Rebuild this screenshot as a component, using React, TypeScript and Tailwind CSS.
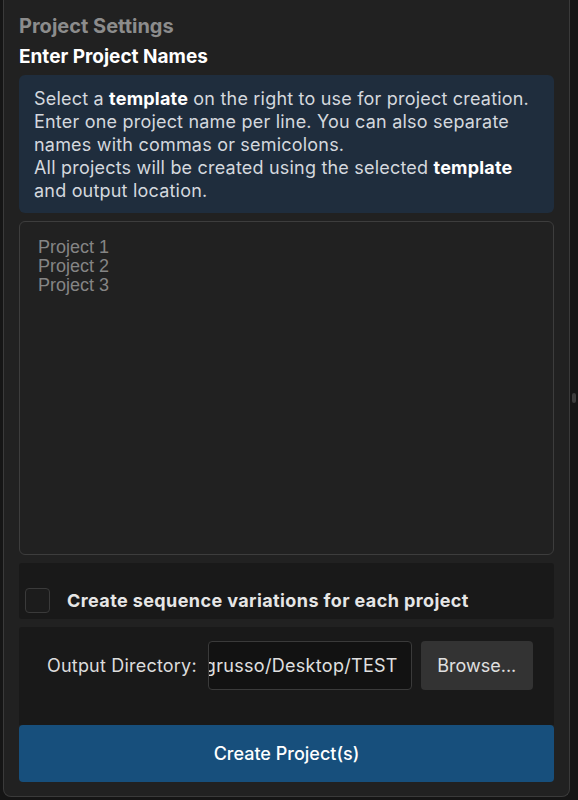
import React, { useState } from 'react';

export default function App() {
    const [names, setNames] = useState('');
    const [variations, setVariations] = useState(false);

    return (
        <div className="w-[578px] h-[800px] bg-[#151515] flex overflow-hidden" style={{ fontFamily: 'Inter, "Noto Sans", sans-serif' }}>
            {/* Settings panel, top is scrolled out of view */}
            <div className="w-[567px] ml-[3px] h-[798px] -mt-px border border-t-0 border-[#3a3a3a] rounded-b-[8px] bg-[#212121] flex flex-col px-[15px] pb-[14px]">
                <h2 className="text-[20px] font-bold text-[#8c8c8c] leading-[24px] mt-[15px]">Project Settings</h2>
                <h3 className="text-[19px] font-bold text-white leading-[24px] mt-[7px]">Enter Project Names</h3>

                {/* Info box */}
                <div className="mt-[6px] rounded-[6px] bg-[#1f2d3d] pl-[15px] pr-[21px] pt-[12px] pb-[11px] text-[18px] leading-[23px] tracking-[0.2px] text-[#d4d8de]">
                    Select a <b className="text-white">template</b> on the right to use for project creation.<br />
                    Enter one project name per line. You can also separate names with commas or semicolons.<br />
                    All projects will be created using the selected <b className="text-white">template</b> and output location.
                </div>

                {/* Names textarea */}
                <textarea
                    value={names}
                    onChange={e => setNames(e.target.value)}
                    placeholder={'Project 1\nProject 2\nProject 3'}
                    className="mt-[8px] h-[334px] shrink-0 resize-none rounded-[6px] border border-[#3d3d3d] bg-[#212121] px-[18px] py-[16px] text-[18px] leading-[19px] text-[#dddddd] placeholder:text-[#858585] outline-none"
                    style={{ fontFamily: '"Liberation Sans", Arial, sans-serif' }}
                />

                {/* Variations option */}
                <label className="mt-[8px] h-[56px] shrink-0 bg-[#191919] rounded-[3px] flex items-center pl-[6px] gap-[17px] cursor-pointer">
                    <input
                        type="checkbox"
                        checked={variations}
                        onChange={e => setVariations(e.target.checked)}
                        className="appearance-none w-[25px] h-[25px] mt-[18px] rounded-[4px] border border-[#3a3a3a] bg-[#1c1c1c] checked:bg-[#185080]"
                    />
                    <span className="text-[18px] font-bold text-[#e6e6e6] mt-[18px] tracking-[0.4px]">Create sequence variations for each project</span>
                </label>

                {/* Output directory */}
                <div className="mt-[8px] h-[98px] shrink-0 bg-[#191919] rounded-t-[3px] flex items-start pt-[14px] pl-[28px]">
                    <span className="text-[18px] text-[#dcdcdc] leading-[49px] mr-[11px] tracking-[0.2px]">Output Directory:</span>
                    <div className="w-[204px] h-[49px] rounded-[4px] border border-[#3a3a3a] bg-[#121212] flex items-center justify-end overflow-hidden pr-[13px] text-[18px] tracking-[0.3px] text-[#e0e0e0] whitespace-nowrap">
                        /Users/sgrusso/Desktop/TEST
                    </div>
                    <button className="ml-[9px] w-[112px] h-[49px] rounded-[4px] bg-[#333333] text-[18px] text-[#e0e0e0]">Browse...</button>
                </div>

                <button className="h-[57px] shrink-0 rounded-[4px] bg-[#174f7c] text-[18px] font-medium text-white">Create Project(s)</button>
            </div>

            {/* Scrollbar gutter */}
            <div className="flex-1 flex items-start justify-center pt-[393px]">
                <div className="w-[4px] h-[10px] rounded-full bg-[#3c3c3c]" />
            </div>
        </div>
    );
}
